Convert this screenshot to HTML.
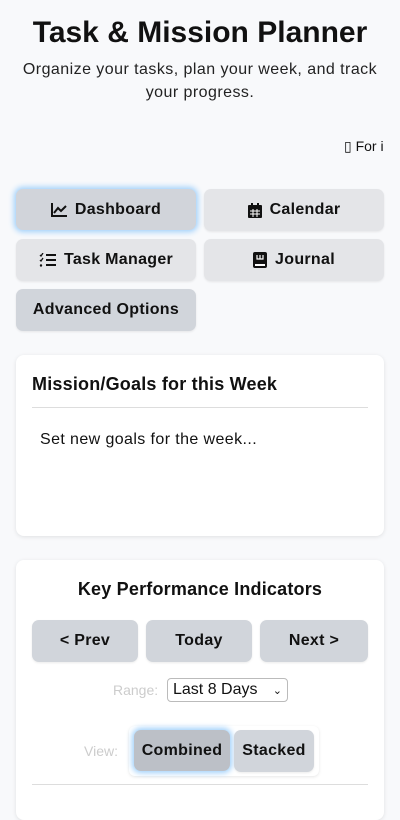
<!DOCTYPE html>
<html><head><meta charset="utf-8"><style>
*{box-sizing:border-box;margin:0;padding:0}
body{width:400px;height:800px;overflow:hidden;background:#f8f9fb;font-family:"Liberation Sans",sans-serif;color:#111;position:relative}
.abs{position:absolute}
h1{position:absolute;top:16px;left:0;width:400px;text-align:center;font-size:30px;font-weight:bold;letter-spacing:0px}
.sub{top:58px;left:14px;width:372px;text-align:center;font-size:16px;line-height:23px;color:#222;letter-spacing:0.45px}
.btn{position:absolute;border-radius:7px;background:#e4e5e8;font-weight:bold;font-size:16px;letter-spacing:0.3px;display:flex;align-items:center;justify-content:center;gap:8px;box-shadow:0 1px 2px rgba(0,0,0,.08)}
.act{background:#d1d4da;box-shadow:0 0 6px 2px #9fd0fb}
.card{position:absolute;background:#fff;border-radius:8px;box-shadow:0 1px 4px rgba(0,0,0,.1)}
.g{background:#d1d5db}
</style></head><body>
<h1>Task &amp; Mission Planner</h1>
<div class="abs sub">Organize your tasks, plan your week, and track your progress.</div>
<div class="abs" style="top:138px;left:344px;font-size:14px">▯ For i</div>
<div class="btn act" style="left:16px;top:189px;width:180px;height:41px"><svg width="16" height="14" viewBox="0 0 16 14"><path d="M1 0V13H16" stroke="#111" stroke-width="2" fill="none"/><path d="M3 10L7 5L10 8L15 3" stroke="#111" stroke-width="2" fill="none"/></svg>Dashboard</div>
<div class="btn" style="left:204px;top:189px;width:180px;height:42px"><svg width="14" height="15" viewBox="0 0 14 15"><rect x="0" y="2" width="14" height="13" rx="1" fill="#111"/><rect x="3" y="0" width="2" height="3" fill="#111"/><rect x="9" y="0" width="2" height="3" fill="#111"/><path d="M2 8H12M2 11H12M5 6V14M9 6V14" stroke="#fff" stroke-width="1"/></svg>Calendar</div>
<div class="btn" style="left:16px;top:239px;width:180px;height:42px"><svg width="17" height="14" viewBox="0 0 17 14"><path d="M1 2L2 3L4 0M1 7L2 8L4 5" stroke="#111" stroke-width="1.3" fill="none"/><circle cx="2" cy="12.5" r="1.2" fill="#111"/><path d="M7 2H17M7 7H17M7 12H17" stroke="#111" stroke-width="2"/></svg>Task Manager</div>
<div class="btn" style="left:204px;top:239px;width:180px;height:42px"><svg width="14" height="16" viewBox="0 0 14 16"><rect x="0" y="0" width="14" height="16" rx="2" fill="#111"/><path d="M4 3V7H10V3M7 3V7" stroke="#fff" stroke-width="1.2" fill="none"/><rect x="2" y="12" width="10" height="2" fill="#fff"/></svg>Journal</div>
<div class="btn g" style="left:16px;top:289px;width:180px;height:42px">Advanced Options</div>
<div class="card" style="left:16px;top:355px;width:368px;height:181px">
<div class="abs" style="left:16px;top:19px;font-size:18px;font-weight:bold;letter-spacing:0.2px">Mission/Goals for this Week</div>
<div class="abs" style="left:16px;top:52px;width:336px;border-top:1px solid #ddd"></div>
<div class="abs" style="left:24px;top:76px;font-size:16px;letter-spacing:0.4px">Set new goals for the week...</div>
</div>
<div class="card" style="left:16px;top:560px;width:368px;height:260px">
<div class="abs" style="left:0;width:368px;top:19px;text-align:center;font-size:18px;font-weight:bold;letter-spacing:0.2px">Key Performance Indicators</div>
</div>
<div class="btn g" style="left:32px;top:620px;width:106px;height:42px">&lt; Prev</div>
<div class="btn g" style="left:146px;top:620px;width:106px;height:42px">Today</div>
<div class="btn g" style="left:260px;top:620px;width:108px;height:42px">Next &gt;</div>
<div class="abs" style="left:113px;top:682px;font-size:14px;color:#ccc">Range:</div>
<div class="abs" style="left:167px;top:678px;width:121px;height:24px;border:1px solid #bbb;border-radius:4px;background:#fff;font-size:16px;padding:2px 5px">Last 8 Days <span style="font-size:11px;position:absolute;right:5px;top:5px">⌄</span></div>
<div class="abs" style="left:84px;top:743px;font-size:14px;color:#ccc">View:</div>
<div class="abs" style="left:129px;top:726px;width:190px;height:50px;background:#fff;border-radius:6px;box-shadow:0 1px 3px rgba(0,0,0,.1)"></div>
<div class="btn act" style="left:134px;top:730px;width:96px;height:41px;background:#bcc0c7">Combined</div>
<div class="btn g" style="left:234px;top:730px;width:80px;height:42px">Stacked</div>
<div class="abs" style="left:32px;top:784px;width:336px;border-top:1px solid #ddd"></div>
</body></html>
